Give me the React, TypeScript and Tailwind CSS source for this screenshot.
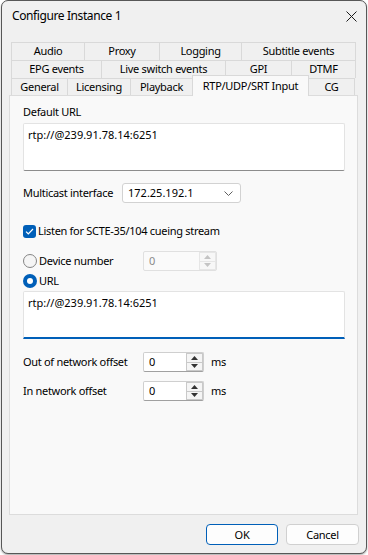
import React from 'react';

type Tab = { label: string; w: string; selected?: boolean; last?: boolean; afterSel?: boolean };

const tabRows: Tab[][] = [
  [
    { label: 'Audio', w: 'w-[73px]' },
    { label: 'Proxy', w: 'w-[75px]' },
    { label: 'Logging', w: 'w-[82px]' },
    { label: 'Subtitle events', w: 'w-[115px]', last: true },
  ],
  [
    { label: 'EPG events', w: 'w-[90px]' },
    { label: 'Live switch events', w: 'w-[124px]' },
    { label: 'GPI', w: 'w-[66px]' },
    { label: 'DTMF', w: 'w-[65px]', last: true },
  ],
];

const bottomTabs: Tab[] = [
  { label: 'General', w: 'w-[56px]' },
  { label: 'Licensing', w: 'w-[63px]' },
  { label: 'Playback', w: 'w-[62px]' },
  { label: 'RTP/UDP/SRT Input', w: 'w-[117px]', selected: true },
  { label: 'CG', w: 'w-[46px]', last: true, afterSel: true },
];

function TabCell({ tab }: { tab: Tab }) {
  if (tab.selected) {
    return (
      <div
        className={`${tab.w} relative z-10 -mb-px flex h-[21px] shrink-0 items-center justify-center border-x border-t border-[#d9d9d9] bg-[#f9f9f9]`}
      >
        {tab.label}
      </div>
    );
  }
  return (
    <div
      className={`${tab.w} flex h-full shrink-0 items-center justify-center border-t border-[#d9d9d9] bg-[#f0f0f0] ${
        tab.afterSel ? '' : 'border-l'
      } ${tab.last ? 'border-r' : ''}`}
    >
      {tab.label}
    </div>
  );
}

function Arrow({ up, color }: { up?: boolean; color: string }) {
  return (
    <svg width="7" height="4" viewBox="0 0 7 4">
      <polygon points={up ? '0,4 3.5,0 7,4' : '0,0 3.5,4 7,0'} fill={color} />
    </svg>
  );
}

function Spin({ w, disabled }: { w: string; disabled?: boolean }) {
  const arrow = disabled ? '#c4c4c4' : '#333333';
  return (
    <div
      className={`${w} flex h-[20px] items-stretch rounded-[2px] border ${
        disabled ? 'border-[#e0e0e0] bg-[#fafafa] text-[#8a8a8a]' : 'border-[#cfcfcf] border-b-[#a0a0a0] bg-white'
      }`}
    >
      <div className="flex-1 pl-[5px] leading-[18px] tracking-normal">0</div>
      <div className="flex w-[17px] flex-col">
        <div
          className={`flex flex-1 items-center justify-center border ${
            disabled ? 'border-[#e6e6e6] bg-[#f7f7f7]' : 'border-[#c9c9c9] bg-[#f5f5f5]'
          }`}
        >
          <Arrow up color={arrow} />
        </div>
        <div
          className={`flex flex-1 items-center justify-center border border-t-0 ${
            disabled ? 'border-[#e6e6e6] bg-[#f7f7f7]' : 'border-[#c9c9c9] bg-[#f5f5f5]'
          }`}
        >
          <Arrow color={arrow} />
        </div>
      </div>
    </div>
  );
}

function Radio({ checked }: { checked?: boolean }) {
  if (checked) {
    return (
      <div className="flex h-[14px] w-[14px] shrink-0 items-center justify-center rounded-full bg-[#005fb8]">
        <div className="h-[6px] w-[6px] rounded-full bg-white" />
      </div>
    );
  }
  return <div className="h-[14px] w-[14px] shrink-0 rounded-full border border-[#858585] bg-[#f5f5f5]" />;
}

export default function App() {
  return (
    <div className="h-[555px] w-[368px] bg-white font-['Noto_Sans',sans-serif] text-[11px] tracking-[-0.3px] text-black">
      <div className="ml-px flex h-[554px] w-[366px] flex-col rounded-[7px] border border-[#575757] bg-[#f0f0f0] shadow-[0_1px_2px_rgba(0,0,0,0.35)]">
        {/* title bar */}
        <div className="flex h-[30px] shrink-0 items-center justify-between pl-[10px] pr-[8px]">
          <span className="text-[12px] tracking-[-0.4px]">Configure Instance 1</span>
          <svg width="11" height="11" viewBox="0 0 11 11" className="mr-[1px]">
            <path d="M0.5 0.5 L10.5 10.5 M10.5 0.5 L0.5 10.5" stroke="#1b1b1b" strokeWidth="1" />
          </svg>
        </div>

        {/* tabs */}
        <div className="mt-[11px] pl-[9px]">
          {tabRows.map((row, i) => (
            <div key={i} className="flex h-[18px]">
              {row.map((t) => (
                <TabCell key={t.label} tab={t} />
              ))}
            </div>
          ))}
          <div className="flex h-[17px] items-end">
            {bottomTabs.map((t) => (
              <TabCell key={t.label} tab={t} />
            ))}
          </div>
        </div>

        {/* panel */}
        <div className="ml-[7px] h-[420px] w-[349px] shrink-0 border border-[#dcdcdc] bg-[#f9f9f9] pl-[13px] pt-[8px]">
          <div className="leading-[16px]">Default URL</div>
          <div className="mt-[3px] h-[48px] w-[322px] rounded-[2px] border border-[#e3e3e3] border-b-[#8c8c8c] bg-white pl-[4px] pt-[3px] leading-[16px] tracking-normal">
            rtp://@239.91.78.14:6251
          </div>

          <div className="mt-[12px] flex h-[20px] items-center">
            <div className="w-[99px]">Multicast interface</div>
            <div className="flex h-[20px] w-[119px] items-center justify-between rounded-[3px] border border-[#d2d2d2] bg-white pl-[5px] pr-[7px]">
              <span className="tracking-normal">172.25.192.1</span>
              <svg width="9" height="5" viewBox="0 0 9 5">
                <polyline points="0.5,0.5 4.5,4.5 8.5,0.5" fill="none" stroke="#5f5f5f" strokeWidth="1" />
              </svg>
            </div>
          </div>

          <div className="mt-[20px] flex h-[16px] items-center gap-[2px]">
            <div className="flex h-[13px] w-[13px] items-center justify-center rounded-[3px] bg-[#005fb8]">
              <svg width="9" height="7" viewBox="0 0 9 7">
                <polyline points="1,3.6 3.3,5.8 8,1" fill="none" stroke="white" strokeWidth="1.2" />
              </svg>
            </div>
            <span>Listen for SCTE-35/104 cueing stream</span>
          </div>

          <div className="mt-[12px] flex h-[20px] items-center">
            <div className="flex w-[120px] items-center gap-[2px]">
              <Radio />
              <span>Device number</span>
            </div>
            <Spin w="w-[74px]" disabled />
          </div>

          <div className="mt-[3px] flex h-[14px] items-center gap-[2px]">
            <Radio checked />
            <span>URL</span>
          </div>

          <div className="mt-[3px] h-[48px] w-[322px] rounded-t-[2px] border border-[#e3e3e3] border-b-2 border-b-[#005fb8] bg-white pl-[4px] pt-[3px] leading-[16px] tracking-normal">
            rtp://@239.91.78.14:6251
          </div>

          <div className="mt-[13px] flex h-[20px] items-center">
            <div className="w-[120px]">Out of network offset</div>
            <Spin w="w-[61px]" />
            <span className="ml-[7px]">ms</span>
          </div>

          <div className="mt-[9px] flex h-[20px] items-center">
            <div className="w-[120px]">In network offset</div>
            <Spin w="w-[61px]" />
            <span className="ml-[7px]">ms</span>
          </div>
        </div>

        {/* buttons */}
        <div className="mt-[9px] flex justify-end gap-[8px] pr-[7px]">
          <button className="h-[21px] w-[72px] rounded-[4px] border border-[#005fb8] bg-[#fdfdfd] text-[11px] leading-[19px]">
            OK
          </button>
          <button className="h-[21px] w-[73px] rounded-[4px] border border-[#d0d0d0] bg-[#fdfdfd] text-[11px] leading-[19px]">
            Cancel
          </button>
        </div>
      </div>
    </div>
  );
}
